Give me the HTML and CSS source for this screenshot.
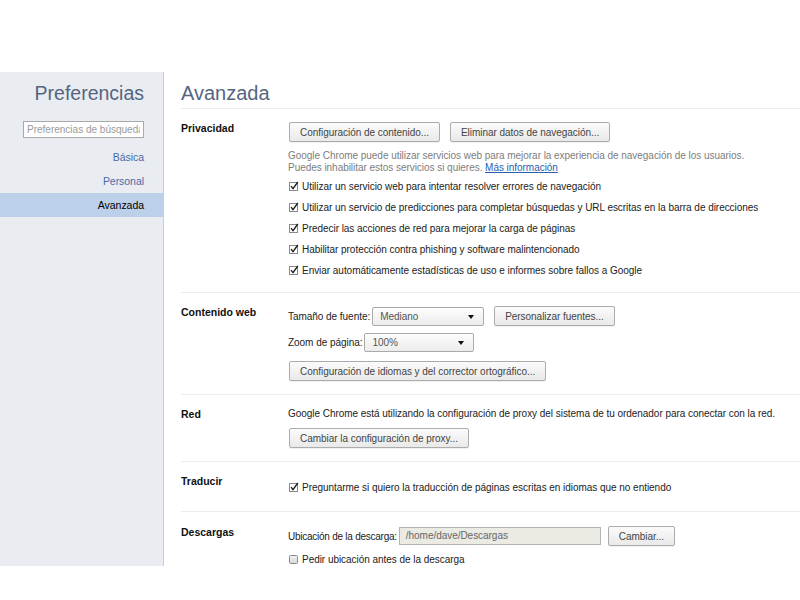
FILE: index.html
```html
<!DOCTYPE html>
<html lang="es">
<head>
<meta charset="utf-8">
<title>Preferencias - Avanzada</title>
<link rel="stylesheet" href="styles.css">
</head>
<body>
<div class="frame">
  <nav class="sidebar">
    <h1 class="side-title">Preferencias</h1>
    <div class="search"><input class="search-input" type="text" placeholder="Preferencias de búsqueda"></div>
    <ul class="nav">
      <li class="nav-item">Básica</li>
      <li class="nav-item">Personal</li>
      <li class="nav-item selected">Avanzada</li>
    </ul>
  </nav>
  <main class="main">
    <h1 class="page-title">Avanzada</h1>

    <section class="section">
      <h3 class="label">Privacidad</h3>
      <div class="controls">
        <div class="btn-row">
          <button class="btn">Configuración de contenido...</button>
          <button class="btn">Eliminar datos de navegación...</button>
        </div>
        <p class="desc">Google Chrome puede utilizar servicios web para mejorar la experiencia de navegación de los usuarios.<br>Puedes inhabilitar estos servicios si quieres. <a class="link">Más información</a></p>
        <div class="check"><svg class="cb" width="11" height="11" viewBox="0 0 11 11"><rect x="0.5" y="1.5" width="8" height="8" fill="#fff" stroke="#8a8a8a"/><path d="M2 5.2 L4 7.6 L8.8 1" fill="none" stroke="#1a1a1a" stroke-width="1.3"/></svg><span>Utilizar un servicio web para intentar resolver errores de navegación</span></div>
        <div class="check"><svg class="cb" width="11" height="11" viewBox="0 0 11 11"><rect x="0.5" y="1.5" width="8" height="8" fill="#fff" stroke="#8a8a8a"/><path d="M2 5.2 L4 7.6 L8.8 1" fill="none" stroke="#1a1a1a" stroke-width="1.3"/></svg><span>Utilizar un servicio de predicciones para completar búsquedas y URL escritas en la barra de direcciones</span></div>
        <div class="check"><svg class="cb" width="11" height="11" viewBox="0 0 11 11"><rect x="0.5" y="1.5" width="8" height="8" fill="#fff" stroke="#8a8a8a"/><path d="M2 5.2 L4 7.6 L8.8 1" fill="none" stroke="#1a1a1a" stroke-width="1.3"/></svg><span>Predecir las acciones de red para mejorar la carga de páginas</span></div>
        <div class="check"><svg class="cb" width="11" height="11" viewBox="0 0 11 11"><rect x="0.5" y="1.5" width="8" height="8" fill="#fff" stroke="#8a8a8a"/><path d="M2 5.2 L4 7.6 L8.8 1" fill="none" stroke="#1a1a1a" stroke-width="1.3"/></svg><span>Habilitar protección contra phishing y software malintencionado</span></div>
        <div class="check"><svg class="cb" width="11" height="11" viewBox="0 0 11 11"><rect x="0.5" y="1.5" width="8" height="8" fill="#fff" stroke="#8a8a8a"/><path d="M2 5.2 L4 7.6 L8.8 1" fill="none" stroke="#1a1a1a" stroke-width="1.3"/></svg><span>Enviar automáticamente estadísticas de uso e informes sobre fallos a Google</span></div>
      </div>
    </section>

    <section class="section">
      <h3 class="label">Contenido web</h3>
      <div class="controls">
        <div class="field-row">
          <span class="field-label">Tamaño de fuente:</span>
          <div class="select select-font">Mediano</div>
          <button class="btn btn-gap">Personalizar fuentes...</button>
        </div>
        <div class="field-row row-zoom">
          <span class="field-label">Zoom de página:</span>
          <div class="select select-zoom">100%</div>
        </div>
        <div class="btn-row row-lang">
          <button class="btn">Configuración de idiomas y del corrector ortográfico...</button>
        </div>
      </div>
    </section>

    <section class="section">
      <h3 class="label">Red</h3>
      <div class="controls">
        <p class="text">Google Chrome está utilizando la configuración de proxy del sistema de tu ordenador para conectar con la red.</p>
        <div class="btn-row row-proxy">
          <button class="btn">Cambiar la configuración de proxy...</button>
        </div>
      </div>
    </section>

    <section class="section section-translate">
      <h3 class="label">Traducir</h3>
      <div class="controls">
        <div class="check"><svg class="cb" width="11" height="11" viewBox="0 0 11 11"><rect x="0.5" y="1.5" width="8" height="8" fill="#fff" stroke="#8a8a8a"/><path d="M2 5.2 L4 7.6 L8.8 1" fill="none" stroke="#1a1a1a" stroke-width="1.3"/></svg><span>Preguntarme si quiero la traducción de páginas escritas en idiomas que no entiendo</span></div>
      </div>
    </section>

    <section class="section section-downloads">
      <h3 class="label">Descargas</h3>
      <div class="controls">
        <div class="field-row">
          <span class="field-label label-tight">Ubicación de la descarga:</span>
          <div class="path-input">/home/dave/Descargas</div>
          <button class="btn btn-gap-sm">Cambiar...</button>
        </div>
        <div class="check check-spaced"><svg class="cb" width="11" height="11" viewBox="0 0 11 11"><defs><linearGradient id="ug" x1="0" y1="0" x2="0" y2="1"><stop offset="0" stop-color="#f2f2f2"/><stop offset="1" stop-color="#d8d8d8"/></linearGradient></defs><rect x="0.5" y="1.5" width="8" height="8" rx="1" fill="url(#ug)" stroke="#8a8a8a"/></svg><span>Pedir ubicación antes de la descarga</span></div>
      </div>
    </section>
  </main>
</div>
</body>
</html>
```

FILE: styles.css
```css
* { box-sizing: border-box; }

html, body {
  margin: 0;
  padding: 0;
  background: #fff;
}

body {
  font-family: "Liberation Sans", Arial, sans-serif;
  font-size: 10px;
  letter-spacing: -0.04px;
  color: #222;
}

.frame {
  margin-top: 72px;
  height: 494px;
  overflow: hidden;
  display: flex;
}

/* Sidebar */
.sidebar {
  width: 164px;
  flex: none;
  background: #e9edf2;
  border-right: 1px solid #c8cdd4;
}

.side-title {
  margin: 9px 19px 0 0;
  font-size: 19.5px;
  font-weight: normal;
  line-height: 24px;
  letter-spacing: 0;
  text-align: right;
  color: #55657f;
}

.search {
  display: flex;
  justify-content: flex-end;
  padding-right: 19px;
  margin-top: 16px;
}

.search-input {
  width: 121px;
  height: 17px;
  margin: 0;
  padding: 0 3px;
  border: 1px solid #a9a9a9;
  border-radius: 0;
  background: #fff;
  font-family: "Liberation Sans", Arial, sans-serif;
  font-size: 10px;
  color: #333;
  outline: none;
}

.search-input::placeholder {
  color: #9a9a9a;
}

.nav {
  list-style: none;
  margin: 7px 0 0;
  padding: 0;
}

.nav-item {
  height: 24px;
  line-height: 24px;
  padding-right: 19px;
  text-align: right;
  font-size: 10.5px;
  color: #4a69a6;
}

.nav-item.selected {
  background: #bdd0ea;
  color: #000;
}

/* Main */
.main {
  flex: 1;
  min-width: 0;
  padding-left: 17px;
}

.page-title {
  margin: 0;
  padding: 9px 0 3px;
  font-size: 20px;
  font-weight: normal;
  line-height: 24px;
  letter-spacing: 0;
  color: #55657f;
  border-bottom: 1px solid #ececec;
}

.section {
  display: grid;
  grid-template-columns: 107px 1fr;
  padding: 13px 0;
}

.section + .section {
  border-top: 1px solid #ececec;
}

.section-translate {
  padding-bottom: 15px;
}

.section-downloads {
  padding-top: 14px;
}

.label {
  margin: 0;
  font-size: 10.5px;
  font-weight: bold;
  line-height: 12px;
  letter-spacing: 0;
  color: #111;
}

.controls {
  display: flex;
  flex-direction: column;
  align-items: flex-start;
}

.btn-row {
  display: flex;
  gap: 10px;
  padding-left: 1px;
}

.btn {
  height: 20px;
  margin: 0;
  padding: 0 10px;
  border: 1px solid #acacac;
  border-radius: 2px;
  background: linear-gradient(#fbfbfb, #e9e9e9);
  box-shadow: 0 1px 0 rgba(0, 0, 0, 0.06);
  font-family: "Liberation Sans", Arial, sans-serif;
  font-size: 10px;
  letter-spacing: -0.04px;
  color: #444;
  white-space: nowrap;
}

.desc {
  margin: 8px 0 0;
  line-height: 12px;
  color: #7d7d7d;
}

.link {
  color: #2a5db0;
  text-decoration: underline;
}

.check {
  display: flex;
  align-items: center;
  gap: 2px;
  height: 17px;
  margin-top: 4px;
  padding-left: 1px;
  color: #222;
}

.check-spaced {
  margin-top: 5px;
}

.cb {
  flex: none;
}

.field-row {
  display: flex;
  align-items: center;
  height: 20px;
  gap: 2px;
}

.field-label {
  white-space: nowrap;
  color: #222;
}

.label-tight {
  letter-spacing: -0.25px;
}

.row-zoom {
  margin-top: 6px;
}

.row-lang {
  margin-top: 9px;
}

.row-proxy {
  margin-top: 8px;
}

.select {
  position: relative;
  height: 19px;
  padding-left: 7px;
  border: 1px solid #aaa;
  border-radius: 2px;
  background: linear-gradient(#fdfdfd, #ececec);
  line-height: 17px;
  color: #555;
}

.select::after {
  content: "";
  position: absolute;
  right: 9px;
  top: 7px;
  border-left: 3.5px solid transparent;
  border-right: 3.5px solid transparent;
  border-top: 4px solid #111;
}

.select-font {
  width: 112px;
}

.select-zoom {
  width: 110px;
}

.btn-gap {
  margin-left: 8px;
}

.text {
  margin: 0;
  line-height: 12px;
  color: #222;
}

.path-input {
  width: 202px;
  height: 18px;
  padding-left: 6px;
  border: 1px solid #b4b4b4;
  background: #ebebe4;
  line-height: 16px;
  color: #666;
}

.btn-gap-sm {
  margin-left: 5px;
}
```
